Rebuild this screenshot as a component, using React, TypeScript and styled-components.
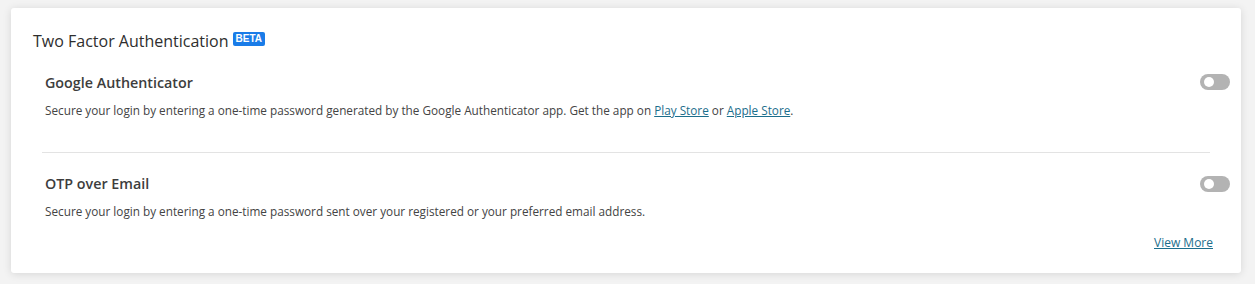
import styled, { createGlobalStyle } from "styled-components"

const GlobalStyle = createGlobalStyle`
    body {
        margin: 0;
        background: #f3f3f3;
        font-family: "Open Sans", "Liberation Sans", sans-serif;
        color: #444;
    }
`

const Card = styled.section`
    margin: 8px 14px 12px 11px;
    background: #fff;
    border-radius: 3px;
    box-shadow: 0 1px 8px rgba(0, 0, 0, 0.12);
    padding: 22px 11px 21px 22px;
`

const Heading = styled.h2`
    margin: 0;
    display: flex;
    align-items: center;
    gap: 4px;
    font-size: 16px;
    font-weight: 500;
    line-height: 22px;
    color: #2e2e2e;
`

const Badge = styled.span`
    display: inline-block;
    background: #1a7ce8;
    color: #fff;
    font-family: "Liberation Sans", Arial, sans-serif;
    font-weight: 700;
    font-size: 10px;
    line-height: 14px;
    padding: 0 3px;
    border-radius: 2px;
    margin-top: -4px;
`

const Option = styled.div`
    display: flex;
    justify-content: space-between;
    align-items: flex-start;
    padding-left: 12px;
    padding-top: ${props => props.$top}px;
`

const OptionBody = styled.div`
    display: flex;
    flex-direction: column;
    gap: 8px;
`

const OptionTitle = styled.h3`
    margin: 0;
    font-size: 14.3px;
    font-weight: 600;
    line-height: 20px;
    color: #3d3d3d;
`

const Description = styled.p`
    margin: 0;
    font-size: 11.75px;
    line-height: 18px;
    color: #444;
`

const TextLink = styled.a`
    color: #1c6e8c;
    text-decoration: underline;
    cursor: pointer;
`

const Toggle = styled.span`
    display: flex;
    align-items: center;
    width: 30px;
    height: 16px;
    margin-top: ${props => props.$top}px;
    padding: 0 4px;
    box-sizing: border-box;
    background: #b3b3b3;
    border-radius: 8px;

    &::before {
        content: "";
        width: 10px;
        height: 10px;
        border-radius: 50%;
        background: #fff;
    }
`

const Divider = styled.hr`
    margin: 33px 20px 0 9px;
    border: 0;
    border-top: 1px solid #e3e3e3;
`

const Footer = styled.div`
    display: flex;
    justify-content: flex-end;
    padding-right: 17px;
    margin-top: 14px;
    font-size: 12px;
    line-height: 18px;
`

export default function App() {
    return (
        <>
            <GlobalStyle />
            <Card>
                <Heading>
                    Two Factor Authentication <Badge>BETA</Badge>
                </Heading>
                <Option $top={21}>
                    <OptionBody>
                        <OptionTitle>Google Authenticator</OptionTitle>
                        <Description>
                            Secure your login by entering a one-time password generated by the Google Authenticator app. Get the app on{" "}
                            <TextLink>Play Store</TextLink> or <TextLink>Apple Store</TextLink>.
                        </Description>
                    </OptionBody>
                    <Toggle $top={1} />
                </Option>
                <Divider />
                <Option $top={21}>
                    <OptionBody>
                        <OptionTitle>OTP over Email</OptionTitle>
                        <Description>
                            Secure your login by entering a one-time password sent over your registered or your preferred email address.
                        </Description>
                    </OptionBody>
                    <Toggle $top={2} />
                </Option>
                <Footer>
                    <TextLink>View More</TextLink>
                </Footer>
            </Card>
        </>
    )
}
